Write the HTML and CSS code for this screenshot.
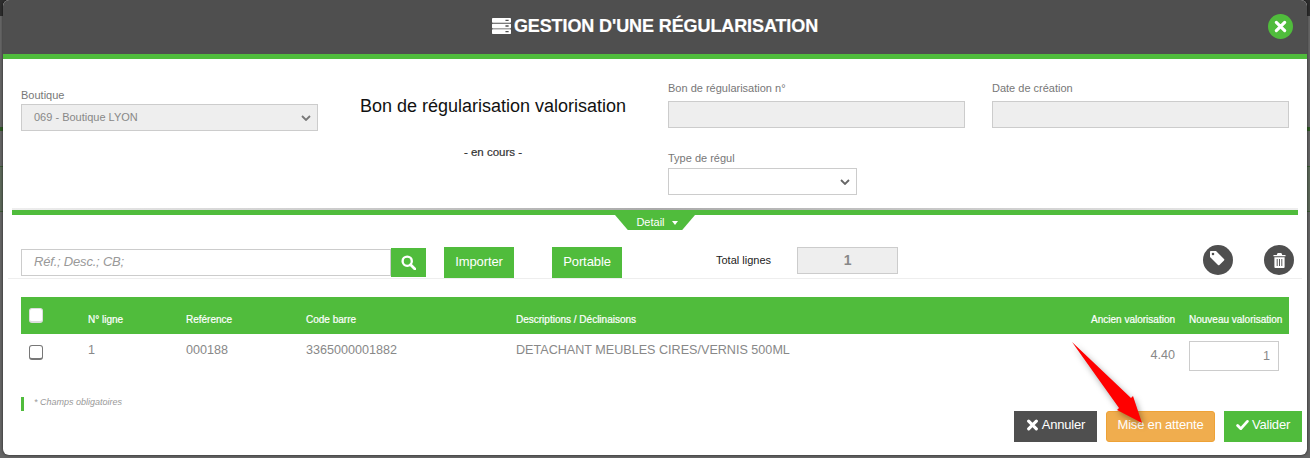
FILE: index.html
```html
<!DOCTYPE html>
<html lang="fr">

<head>
    <meta charset="UTF-8">
    <title>Gestion d'une régularisation</title>
    <link rel="stylesheet" href="styles.css">
</head>

<body>
    <div class="modal">
        <div class="modal-header">
            <svg class="header-icon" viewBox="0 0 24 20"><path fill="#fff" fill-rule="evenodd" d="M1 0h22a1 1 0 0 1 1 1v4a1 1 0 0 1-1 1H1a1 1 0 0 1-1-1V1a1 1 0 0 1 1-1zm0 7h22a1 1 0 0 1 1 1v4a1 1 0 0 1-1 1H1a1 1 0 0 1-1-1V8a1 1 0 0 1 1-1zm0 7h22a1 1 0 0 1 1 1v4a1 1 0 0 1-1 1H1a1 1 0 0 1-1-1v-4a1 1 0 0 1 1-1zM17 2.2v1.6h4V2.200zM17 9.200v1.600h4V9.200zM17 16.200v1.600h4v-1.600z"/></svg>
            <h1>GESTION D'UNE RÉGULARISATION</h1>
            <button class="close-btn" aria-label="Fermer">
                <svg viewBox="0 0 14 14"><path d="M2.500 2.500l9 9m0-9l-9 9" stroke="#fff" stroke-width="3.400" stroke-linecap="round"/></svg>
            </button>
        </div>

        <div class="form-top">
            <div class="field boutique">
                <label>Boutique</label>
                <div class="select-box disabled">069 - Boutique LYON
                    <svg class="chevron" viewBox="0 0 10 6"><path d="M1 1l4 4 4-4" fill="none" stroke="#777" stroke-width="1.800"/></svg>
                </div>
            </div>
            <div class="title-col">
                <h2>Bon de régularisation valorisation</h2>
                <p class="status">- en cours -</p>
            </div>
            <div class="field-col">
                <div class="field">
                    <label>Bon de régularisation n°</label>
                    <div class="input-box disabled"></div>
                </div>
                <div class="field type-regul">
                    <label>Type de régul</label>
                    <div class="select-box">
                        <svg class="chevron" viewBox="0 0 10 6"><path d="M1 1l4 4 4-4" fill="none" stroke="#666" stroke-width="1.800"/></svg>
                    </div>
                </div>
            </div>
            <div class="field date-field">
                <label>Date de création</label>
                <div class="input-box disabled"></div>
            </div>
        </div>

        <div class="separator">
            <div class="detail-tab">Detail <span class="caret"></span></div>
        </div>

        <div class="toolbar">
            <div class="search">
                <div class="search-input">Réf.; Desc.; CB;</div>
                <button class="search-btn" aria-label="Rechercher">
                    <svg viewBox="0 0 14 14"><circle cx="5.800" cy="5.800" r="4.300" fill="none" stroke="#fff" stroke-width="2.200"/><path d="M9 9l4 4" stroke="#fff" stroke-width="2.600" stroke-linecap="round"/></svg>
                </button>
            </div>
            <button class="btn-green import-btn">Importer</button>
            <button class="btn-green portable-btn">Portable</button>
            <span class="total-label">Total lignes</span>
            <div class="total-value">1</div>
            <button class="round-btn tag-btn" aria-label="Étiquette">
                <svg viewBox="0 0 16 16"><path fill="#fff" fill-rule="evenodd" d="M1 1.800A.8.8 0 0 1 1.800 1H7l8 8a1 1 0 0 1 0 1.400L10.400 15A1 1 0 0 1 9 15L1 7zM4 5.300a1.300 1.300 0 1 0 0-2.600 1.300 1.300 0 0 0 0 2.600z"/></svg>
            </button>
            <button class="round-btn trash-btn" aria-label="Supprimer">
                <svg viewBox="0 0 14 16"><path fill="#fff" fill-rule="evenodd" d="M5 0h4l1 2h3.500v1.500H.5V2H4zM1.500 4.500h11V15a1 1 0 0 1-1 1h-9a1 1 0 0 1-1-1zM4 6.500v7.500h1V6.500zM6.500 6.500v7.500h1V6.500zM9 6.500v7.500h1V6.500z"/></svg>
            </button>
        </div>

        <table class="lines">
            <thead>
                <tr>
                    <th class="col-check"><span class="checkbox head"></span></th>
                    <th class="col-line">N° ligne</th>
                    <th class="col-ref">Reférence</th>
                    <th class="col-code">Code barre</th>
                    <th>Descriptions / Déclinaisons</th>
                    <th class="col-old">Ancien valorisation</th>
                    <th class="col-new">Nouveau valorisation</th>
                </tr>
            </thead>
            <tbody>
                <tr>
                    <td><span class="checkbox"></span></td>
                    <td>1</td>
                    <td>000188</td>
                    <td>3365000001882</td>
                    <td>DETACHANT MEUBLES CIRES/VERNIS 500ML</td>
                    <td class="cell-old">4.40</td>
                    <td class="cell-new"><div class="qty">1</div></td>
                </tr>
            </tbody>
        </table>

        <div class="modal-footer">
            <p class="required">* Champs obligatoires</p>
            <div class="actions">
                <button class="btn-dark">
                    <svg viewBox="0 0 14 14"><path d="M2.500 2.500l9 9m0-9l-9 9" stroke="#fff" stroke-width="3.600" stroke-linecap="round"/></svg>
                    Annuler
                </button>
                <button class="btn-orange">Mise en attente</button>
                <button class="btn-green btn-valider">
                    <svg viewBox="0 0 16 14"><path d="M2 7.500l4 4 8-9" fill="none" stroke="#fff" stroke-width="3.400" stroke-linecap="round" stroke-linejoin="round"/></svg>
                    Valider
                </button>
            </div>
        </div>

        <svg class="arrow" viewBox="0 0 80 90"><path fill="#f00" d="M6 4L65 60l2-2 9 27-25-13 2-2z"/></svg>
    </div>
</body>

</html>
```

FILE: styles.css
```css
body {
    margin: 0;
    height: 458px;
    overflow: hidden;
    /* page behind the overlay, only its edges show */
    background: linear-gradient(to bottom, #2e2e2e 0 16px, #666 16px 127px, #2f5a25 127px 131px, #666 131px 166px, #3d5c36 166px 167px, #5e6a5b 167px 211px, #3d5c36 211px 212px, #666 212px);
    font-family: "Liberation Sans", Arial, sans-serif;
    color: #888;
}

.modal {
    position: relative;
    width: 1304px;
    height: 455px;
    margin-left: 3px;
    background: white;
    border-radius: 6px;
    box-shadow: 0 0 3px rgba(0, 0, 0, 0.7);
    overflow: hidden;
}

.modal-header {
    position: relative;
    display: flex;
    justify-content: center;
    align-items: center;
    gap: 3px;
    box-sizing: content-box;
    height: 52px;
    padding-bottom: 2px;
    background-color: #4f4f4f;
    border-bottom: 5px solid #50bc3c;
    color: white;
}

.header-icon {
    width: 19px;
    height: 16px;
}

h1 {
    margin: 0;
    font-size: 18px;
    font-weight: bold;
    letter-spacing: -0.1px;
    -webkit-text-stroke: 0.2px white;
}

.close-btn {
    position: absolute;
    top: 14px;
    right: 14px;
    width: 25px;
    height: 25px;
    padding: 6px;
    border: none;
    border-radius: 50%;
    background-color: #50bc3c;
}

.close-btn svg {
    display: block;
}

/* top form */
.form-top {
    display: grid;
    grid-template-columns: 297px 350px 297px 324px;
    height: 149px;
    padding-left: 18px;
}

.date-field {
    padding-left: 27px;
}

.field label {
    display: block;
    font-size: 11px;
    line-height: 13px;
    margin-bottom: 6px;
    color: #777;
}

.boutique {
    padding-top: 30px;
}

.boutique label {
    margin-bottom: 2px;
}

.field-col,
.date-field {
    padding-top: 23px;
}

.type-regul {
    margin-top: 24px;
}

.type-regul label {
    margin-bottom: 3px;
}

.type-regul .select-box {
    width: 189px;
    background: white;
}

.select-box,
.input-box {
    box-sizing: border-box;
    height: 27px;
    border: 1px solid #ccc;
}

.select-box {
    display: flex;
    align-items: center;
    justify-content: space-between;
    padding: 0 6px 2px 12px;
    font-size: 11px;
    color: #888;
}

.chevron {
    width: 10px;
    height: 6px;
    margin-left: auto;
    margin-top: 2px;
}

.disabled {
    background-color: #eee;
}

.title-col {
    text-align: center;
    padding-top: 36px;
}

h2 {
    margin: 0;
    font-size: 18px;
    line-height: 22px;
    font-weight: normal;
    color: #111;
}

.status {
    margin: 28px 0 0;
    font-size: 11.5px;
    line-height: 14px;
    color: #333;
    -webkit-text-stroke: 0.2px #333;
}

/* separator with detail tab */
.separator {
    position: relative;
    height: 5px;
    margin: 2px 9px 0 9px;
    background-color: #50bc3c;
}

.separator::before {
    content: "";
    position: absolute;
    top: -2px;
    left: 0;
    right: 0;
    height: 2px;
    background: linear-gradient(to right, #eee, #aaa 50%, #eee);
}

.detail-tab {
    position: absolute;
    top: 5px;
    left: 603px;
    box-sizing: border-box;
    width: 80px;
    height: 15px;
    padding-left: 4px;
    font-size: 11px;
    line-height: 15px;
    text-align: center;
    color: white;
    background-color: #50bc3c;
    clip-path: polygon(0 0, 100% 0, 84% 100%, 16% 100%);
}

.caret {
    display: inline-block;
    margin-left: 4px;
    vertical-align: 1px;
    border: 3px solid transparent;
    border-top: 4px solid white;
    border-bottom: 0;
}

/* toolbar */
.toolbar {
    display: flex;
    align-items: flex-start;
    height: 31px;
    margin: 32px 5px 0 5px;
    padding-left: 13px;
    border-bottom: 1px solid #eee;
}

.search {
    display: flex;
    align-items: center;
    margin-top: 1px;
}

.search-input {
    box-sizing: border-box;
    width: 370px;
    height: 27px;
    padding: 0 12px;
    border: 1px solid #ccc;
    font-size: 13px;
    letter-spacing: -0.2px;
    line-height: 23px;
    font-style: italic;
    color: #999;
}

.search-btn {
    width: 35px;
    height: 29px;
    padding: 7px 10px;
    border: none;
    background-color: #50bc3c;
}

.search-btn svg {
    display: block;
}

.btn-green {
    border: none;
    background-color: #50bc3c;
    color: white;
    font-family: inherit;
    font-size: 13px;
}

.import-btn,
.portable-btn {
    width: 70px;
    height: 31px;
    padding: 0 0 2px;
    letter-spacing: -0.1px;
}

.import-btn {
    margin-left: 18px;
}

.portable-btn {
    margin-left: 38px;
}

.total-label {
    margin-left: 94px;
    font-size: 11px;
    line-height: 26px;
    color: #222;
}

.total-value {
    box-sizing: border-box;
    width: 101px;
    height: 27px;
    margin-left: 26px;
    border: 1px solid #ccc;
    background-color: #eee;
    font-size: 14px;
    font-weight: bold;
    line-height: 25px;
    text-align: center;
    color: #888;
}

.round-btn {
    display: flex;
    justify-content: center;
    align-items: center;
    width: 30px;
    height: 30px;
    margin-top: -2px;
    border: none;
    border-radius: 50%;
    background-color: #4f4f4f;
    padding: 0;
}

.tag-btn {
    margin-left: 305px;
}

.tag-btn svg {
    width: 16px;
    height: 16px;
    margin: 0 2px 4px 0;
}

.trash-btn {
    margin-left: 31px;
}

.trash-btn svg {
    width: 13px;
    height: 15px;
}

/* table */
.lines {
    width: 1268px;
    margin: 18px 0 0 18px;
    border-collapse: collapse;
    table-layout: fixed;
}

.lines th {
    height: 37px;
    padding: 7px 0 0;
    box-sizing: border-box;
    background-color: #50bc3c;
    color: white;
    font-size: 10px;
    font-weight: normal;
    text-align: left;
    -webkit-text-stroke: 0.2px white;
}

.lines td {
    padding: 8px 0 0;
    font-size: 12.6px;
    line-height: 16px;
    vertical-align: top;
}

.col-check { width: 67px; }
.col-line { width: 98px; }
.col-ref { width: 120px; }
.col-code { width: 210px; }
.col-old { width: 159px; text-align: right !important; }
.col-new { width: 114px; padding-left: 14px !important; }

.checkbox {
    display: block;
    box-sizing: border-box;
    width: 14px;
    height: 15px;
    margin: 3px 0 0 8px;
    border: 1px solid #777;
    border-bottom-width: 2px;
    border-radius: 3px;
    background: white;
}

.checkbox.head {
    margin: -7px 0 0 8px;
    border-color: #ddd;
}

.lines td.cell-old {
    padding-top: 13px;
    text-align: right;
}

.qty {
    box-sizing: border-box;
    width: 90px;
    height: 30px;
    margin-left: 14px;
    margin-top: -1px;
    padding-right: 8px;
    border: 1px solid #ccc;
    font-size: 12.6px;
    line-height: 28px;
    text-align: right;
}

/* footer */
.modal-footer {
    position: absolute;
    left: 0;
    right: 0;
    bottom: 0;
}

.required {
    margin: 0 0 0 18px;
    padding-left: 10px;
    height: 14px;
    border-left: 3px solid #50bc3c;
    font-size: 9px;
    line-height: 10px;
    font-style: italic;
    color: #999;
}

.actions {
    display: flex;
    justify-content: flex-end;
    gap: 9px;
    padding-right: 5px;
    margin-bottom: 13px;
}

.actions button {
    display: flex;
    justify-content: center;
    align-items: center;
    gap: 3px;
    box-sizing: border-box;
    height: 31px;
    padding: 0 0 4px;
    border: none;
    font-family: inherit;
    font-size: 13px;
    letter-spacing: -0.2px;
    color: white;
}

.actions svg {
    width: 13px;
    height: 12px;
}

.btn-dark {
    width: 83px;
    background-color: #4f4f4f;
}

.actions .btn-orange {
    width: 109px;
    background-color: #f0ad4e;
    border: 1px solid #eea236;
    border-radius: 3px;
}

.actions .btn-valider {
    width: 78px;
}

/* annotation arrow drawn over the screenshot */
.arrow {
    position: absolute;
    top: 338px;
    left: 1063px;
    width: 80px;
    height: 90px;
    filter: drop-shadow(2px 3px 3px rgba(0, 0, 0, 0.35));
}
```
